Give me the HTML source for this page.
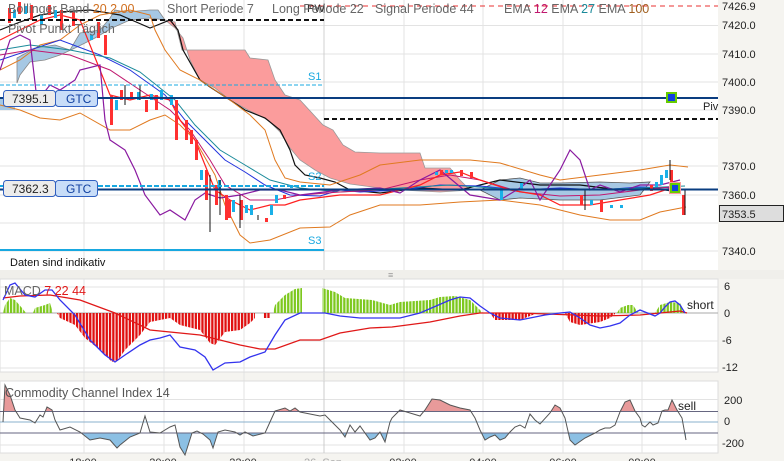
<!DOCTYPE html>
<html><head><meta charset="utf-8"><style>
html,body{margin:0;padding:0;background:#f5f4f0;}
svg{display:block;font-family:"Liberation Sans",sans-serif;}
</style></head><body>
<svg width="784" height="461" viewBox="0 0 784 461" xmlns="http://www.w3.org/2000/svg">
<defs>
<pattern id="pg" width="3.3" height="10" patternUnits="userSpaceOnUse"><rect x="0" y="0" width="2.3" height="10" fill="#7dc81e"/></pattern>
<pattern id="pr" width="3.3" height="10" patternUnits="userSpaceOnUse"><rect x="0" y="0" width="2.3" height="10" fill="#e01010"/></pattern>
<clipPath id="cAbove"><rect x="0" y="380" width="718" height="31.5"/></clipPath>
<clipPath id="cBelow"><rect x="0" y="433" width="718" height="30"/></clipPath>
<clipPath id="main"><rect x="0" y="0" width="718" height="270"/></clipPath>
</defs>
<rect x="0" y="0" width="784" height="461" fill="#f5f4f0"/>
<rect x="0" y="0" width="718" height="270" fill="#fff"/>
<g stroke="#e3e3e3" stroke-width="1">
<line x1="0" y1="25.5" x2="718" y2="25.5"/><line x1="0" y1="54" x2="718" y2="54"/><line x1="0" y1="82" x2="718" y2="82"/><line x1="0" y1="110" x2="718" y2="110"/><line x1="0" y1="138" x2="718" y2="138"/><line x1="0" y1="166" x2="718" y2="166"/><line x1="0" y1="195" x2="718" y2="195"/><line x1="0" y1="223" x2="718" y2="223"/><line x1="0" y1="251" x2="718" y2="251"/>
<line x1="84" y1="0" x2="84" y2="453"/><line x1="164" y1="0" x2="164" y2="453"/><line x1="244" y1="0" x2="244" y2="453"/><line x1="324" y1="0" x2="324" y2="453" stroke="#d0d0d0"/><line x1="404" y1="0" x2="404" y2="453"/><line x1="483" y1="0" x2="483" y2="453"/><line x1="563" y1="0" x2="563" y2="453"/><line x1="642" y1="0" x2="642" y2="453"/>
</g>
<g clip-path="url(#main)">
<polygon fill="#a6c8e4" stroke="#888" stroke-width="0.8" points="17,83 17,58 35,48 55,45 70,50 80,33 100,30 110,18 115,10 125,12 150,10 158,10 165,20 150,18 130,20 112,28 95,38 75,48 60,55 45,60 30,62 20,75"/>
<polygon fill="#a6c8e4" points="0,97 15,97 15,110 0,110"/>
<polygon fill="#fb9c9c" stroke="#999" stroke-width="0.8" points="165,20 175,22 182,50 245,50 250,58 268,60 275,80 285,95 300,100 323,125 333,130 343,145 355,152 380,153 420,153 425,168 450,168 460,180 470,190 440,192 400,190 380,188 350,184 330,178 315,170 300,160 290,148 280,132 268,120 248,110 230,100 215,88 200,80 190,60 183,38 175,28"/>
<polygon fill="#a6c8e4" stroke="#555" stroke-width="0.8" points="480,190 500,180 520,178 540,183 560,183 600,182 630,183 650,182 640,195 600,200 560,200 520,198 500,200"/>
<polyline fill="none" stroke="#111" stroke-width="1.2" points="0,30 20,22 40,15 60,12 90,10 120,15 150,28 170,20 178,30 183,50 200,80 210,87 230,100 245,110 265,118 280,130 290,150 295,165 305,175 320,178 335,182 350,190 380,193 420,188 460,190 500,180 540,185 580,185 620,190 650,188 680,192"/>
<polyline fill="none" stroke="#e07a20" stroke-width="1" points="0,70 20,60 40,45 60,40 80,25 100,15 130,10 150,15 155,30 165,50 180,70 200,80 230,100 250,115 265,130 275,160 285,178 300,182 330,185 360,175 380,165 420,160 470,160 500,163 540,175 560,180 600,175 640,170 670,165 688,167"/>
<polyline fill="none" stroke="#e07a20" stroke-width="1" points="0,105 20,110 40,118 60,120 80,113 110,130 130,130 150,120 165,115 180,125 195,140 215,175 225,205 240,235 250,243 270,240 300,228 330,227 350,215 380,205 420,205 460,202 500,200 540,205 580,215 610,220 640,220 660,212 686,207"/>
<polyline fill="none" stroke="#2233dd" stroke-width="1" points="0,60 30,50 60,40 100,55 130,70 165,95 185,120 205,140 225,160 245,172 265,185 290,195 320,196 340,190 360,192 400,190 440,185 480,186 520,190 560,188 600,190 640,187 680,188"/>
<polyline fill="none" stroke="#1a8a9a" stroke-width="1" points="0,50 30,45 70,50 110,58 140,72 175,100 195,125 220,150 245,165 270,180 300,188 340,192 400,188 450,185 520,190 580,190 640,188 685,186"/>
<polyline fill="none" stroke="#c0186e" stroke-width="1" points="0,55 30,50 70,55 110,70 140,90 170,110 190,130 210,160 225,185 250,200 275,200 300,195 340,192 380,190 420,180 450,175 480,180 520,192 560,196 600,195 640,190 680,186"/>
<polyline fill="none" stroke="#ff2020" stroke-width="1.2" points="0,40 20,30 40,20 60,15 80,20 110,95 130,100 150,95 170,100 180,120 195,140 205,165 215,190 230,200 250,210 270,205 285,205 300,200 340,195 380,195 420,185 440,175 460,172 480,180 510,190 540,195 560,205 590,205 620,200 650,195 680,185"/>
<polyline fill="none" stroke="#8a1aa0" stroke-width="1.2" points="0,70 10,40 20,35 30,40 37,100 42,95 50,85 60,90 75,80 80,70 100,65 105,120 110,140 125,150 135,170 145,195 160,215 170,210 185,220 195,200 205,193 220,198 240,195 260,190 280,190 300,195 340,190 380,188 400,193 420,180 440,170 470,195 500,200 520,188 530,180 540,200 550,185 560,170 570,150 580,160 590,190 600,185 620,192 640,185 660,185 680,180"/>
<g fill="#ff3030">
<rect x="110" y="95" width="3" height="30"/><rect x="155" y="95" width="3" height="15"/><rect x="175" y="100" width="3" height="40"/><rect x="185" y="120" width="3" height="20"/><rect x="205" y="170" width="3" height="30"/><rect x="225" y="195" width="3" height="25"/><rect x="240" y="200" width="3" height="20"/><rect x="265" y="218" width="3" height="4"/><rect x="283" y="195" width="3" height="4"/><rect x="440" y="170" width="3" height="5"/><rect x="460" y="170" width="3" height="6"/><rect x="580" y="195" width="3" height="10"/><rect x="600" y="200" width="3" height="12"/><rect x="670" y="170" width="3" height="20"/><rect x="682" y="195" width="3" height="20"/>
<rect x="120" y="90" width="3" height="10"/><rect x="60" y="10" width="3" height="20"/><rect x="30" y="5" width="3" height="15"/><rect x="195" y="140" width="3" height="20"/><rect x="215" y="185" width="3" height="20"/>
<rect x="8" y="8" width="3" height="15"/><rect x="18" y="2" width="3" height="12"/><rect x="48" y="5" width="3" height="10"/><rect x="72" y="12" width="3" height="14"/><rect x="97" y="22" width="3" height="16"/><rect x="104" y="35" width="3" height="20"/><rect x="130" y="92" width="3" height="8"/><rect x="145" y="100" width="3" height="12"/><rect x="190" y="130" width="3" height="14"/><rect x="228" y="200" width="3" height="18"/><rect x="470" y="172" width="3" height="6"/><rect x="650" y="185" width="3" height="6"/>
</g>
<g fill="#1ab0e8">
<rect x="115" y="100" width="3" height="10"/><rect x="160" y="90" width="3" height="10"/><rect x="170" y="95" width="3" height="10"/><rect x="200" y="170" width="3" height="10"/><rect x="218" y="180" width="3" height="10"/><rect x="232" y="200" width="3" height="12"/><rect x="250" y="205" width="3" height="10"/><rect x="270" y="205" width="3" height="10"/><rect x="275" y="195" width="3" height="8"/><rect x="290" y="185" width="3" height="3"/><rect x="435" y="172" width="3" height="3"/><rect x="450" y="170" width="3" height="3"/><rect x="500" y="190" width="3" height="10"/><rect x="590" y="200" width="3" height="5"/><rect x="610" y="205" width="3" height="3"/><rect x="620" y="205" width="3" height="3"/><rect x="660" y="175" width="3" height="10"/><rect x="665" y="170" width="3" height="8"/><rect x="40" y="15" width="3" height="10"/><rect x="90" y="35" width="3" height="5"/>
<rect x="13" y="10" width="3" height="8"/><rect x="24" y="6" width="3" height="8"/><rect x="54" y="10" width="3" height="8"/><rect x="137" y="92" width="3" height="8"/><rect x="150" y="94" width="3" height="6"/><rect x="245" y="205" width="3" height="8"/><rect x="445" y="170" width="3" height="3"/><rect x="520" y="183" width="3" height="6"/><rect x="655" y="182" width="3" height="5"/>
</g>
<g stroke="#111" stroke-width="1">
<line x1="210" y1="175" x2="210" y2="232"/><line x1="240" y1="195" x2="240" y2="228"/><line x1="125" y1="85" x2="125" y2="105"/><line x1="140" y1="85" x2="140" y2="100"/><line x1="220" y1="180" x2="220" y2="215"/><line x1="585" y1="190" x2="585" y2="210"/><line x1="670" y1="160" x2="670" y2="180"/><line x1="685" y1="190" x2="685" y2="215"/><line x1="258" y1="215" x2="258" y2="220"/>
</g>
</g>
<line x1="0" y1="20" x2="324" y2="20" stroke="#111" stroke-width="2" stroke-dasharray="5,3"/>
<line x1="324" y1="119" x2="718" y2="119" stroke="#111" stroke-width="2" stroke-dasharray="5,3"/>
<line x1="300" y1="6" x2="718" y2="6" stroke="#e83030" stroke-width="1" stroke-dasharray="5,4"/>
<line x1="0" y1="85" x2="324" y2="85" stroke="#18a8e0" stroke-width="1" stroke-dasharray="4,2"/>
<line x1="0" y1="186" x2="324" y2="186" stroke="#18a8e0" stroke-width="2" stroke-dasharray="5,2"/>
<line x1="0" y1="250" x2="324" y2="250" stroke="#18a8e0" stroke-width="2"/>
<line x1="0" y1="98" x2="718" y2="98" stroke="#0a3d80" stroke-width="2"/>
<line x1="0" y1="189.5" x2="718" y2="189.5" stroke="#0a3d80" stroke-width="2"/>
<rect x="667" y="93" width="9" height="9" fill="#1040e0" stroke="#66cc00" stroke-width="2"/>
<rect x="669" y="182" width="12" height="12" fill="#fb9c9c"/>
<rect x="671" y="184" width="8" height="8" fill="#1040e0" stroke="#66cc00" stroke-width="2"/>
<g font-size="11" fill="#18a8e0"><text x="308" y="80">S1</text><text x="308" y="180">S2</text><text x="308" y="244">S3</text></g>
<text x="703" y="110" font-size="11" fill="#222">Piv</text>
<text x="307" y="12" font-size="11" fill="#222">PW</text>
<g font-size="12">
<rect x="3.5" y="90.5" width="52" height="16" rx="3" fill="#ececec" stroke="#3060c0"/><rect x="55.5" y="90.5" width="42" height="16" rx="3" fill="#c8ddf8" stroke="#3060c0"/>
<text x="12" y="103" fill="#222">7395.1</text><text x="66" y="103" fill="#1040a0">GTC</text>
<rect x="3.5" y="180.5" width="52" height="16" rx="3" fill="#ececec" stroke="#3060c0"/><rect x="55.5" y="180.5" width="42" height="16" rx="3" fill="#c8ddf8" stroke="#3060c0"/>
<text x="12" y="193" fill="#222">7362.3</text><text x="66" y="193" fill="#1040a0">GTC</text>
</g>
<text x="10" y="266" font-size="11" fill="#111">Daten sind indikativ</text>
<g font-size="12.5" fill="#666">
<text x="8" y="13">Bollinger Band <tspan fill="#d07020">20  2.00</tspan></text>
<text x="167" y="13">Short Periode  7</text>
<text x="272" y="13">Long Periode  22</text>
<text x="375" y="13">Signal Periode  44</text>
<text x="504" y="13">EMA  <tspan fill="#c0186e">12</tspan>   EMA  <tspan fill="#1a8a9a">27</tspan>   EMA  <tspan fill="#a06020">100</tspan></text>
<text x="8" y="33">Pivot Punkt  Täglich</text>
</g>
<g font-size="11" fill="#222">
<text x="722" y="10">7426.9</text><text x="722" y="29">7420.0</text><text x="722" y="58">7410.0</text><text x="722" y="86">7400.0</text><text x="722" y="114">7390.0</text><text x="722" y="170">7370.0</text><text x="722" y="199">7360.0</text><text x="722" y="255">7340.0</text>
</g>
<rect x="719.5" y="205.5" width="64" height="16" fill="#ddd" stroke="#222"/>
<text x="722" y="218" font-size="11" fill="#222">7353.5</text>
<rect x="0" y="270" width="784" height="9" fill="#f0efeb"/>
<text x="388" y="278" font-size="9" fill="#999">≡</text>
<text x="388" y="387" font-size="9" fill="#999">≡</text>
<rect x="0" y="279" width="718" height="93" fill="#fff" stroke="#ddd"/>
<g stroke="#e3e3e3"><line x1="0" y1="287" x2="718" y2="287"/><line x1="0" y1="341" x2="718" y2="341"/><line x1="0" y1="368" x2="718" y2="368"/>
<line x1="84" y1="279" x2="84" y2="372"/><line x1="164" y1="279" x2="164" y2="372"/><line x1="244" y1="279" x2="244" y2="372"/><line x1="404" y1="279" x2="404" y2="372"/><line x1="483" y1="279" x2="483" y2="372"/><line x1="563" y1="279" x2="563" y2="372"/><line x1="642" y1="279" x2="642" y2="372"/></g>
<line x1="324" y1="279" x2="324" y2="372" stroke="#ccc"/>
<line x1="0" y1="313" x2="718" y2="313" stroke="#aaa"/>
<g>
<polygon fill="url(#pg)" points="3,313 5,305 10,298 15,300 22,308 26,313"/>
<polygon fill="url(#pg)" points="33,313 35,308 45,305 50,303 53,313"/>
<polygon fill="url(#pr)" points="57,313 60,318 75,325 85,338 100,350 112,362 118,360 125,350 140,335 150,322 170,318 180,325 200,330 210,343 215,345 225,332 240,330 250,323 255,318 255,313"/>
<polygon fill="url(#pr)" points="263,313 263,318 270,318 270,313"/>
<polygon fill="url(#pg)" points="273,313 275,305 285,295 295,289 302,288 302,313"/>
<polygon fill="url(#pg)" points="322,313 322,288 335,292 345,298 372,300 390,305 400,302 430,300 440,297 455,296 470,300 480,310 483,313"/>
<polygon fill="url(#pr)" points="490,313 495,320 520,320 525,318 535,314 535,313"/>
<polygon fill="url(#pr)" points="565,313 570,322 580,325 600,322 610,318 615,314 615,313"/>
<polygon fill="url(#pg)" points="617,313 620,308 628,305 633,305 638,313"/>
<polygon fill="url(#pg)" points="655,313 660,305 670,302 680,303 685,313"/>
</g>
<polyline fill="none" stroke="#e01818" stroke-width="1.3" points="3,298 20,296 50,295 80,300 115,313 150,330 200,335 240,345 260,349 275,349 300,340 320,340 340,333 370,328 392,327 430,322 460,316 480,313 520,313 600,316 640,315 680,311 687,313"/>
<polyline fill="none" stroke="#3333ee" stroke-width="1.3" points="3,300 10,285 15,283 25,295 35,297 45,290 52,290 60,300 75,315 90,340 105,355 115,362 125,355 140,345 150,340 160,338 170,335 180,347 195,350 205,357 213,370 225,363 240,362 250,357 265,352 275,335 285,320 300,313 325,313 340,316 360,318 380,318 400,318 420,313 450,300 460,297 470,298 480,306 490,313 500,318 520,320 530,318 545,315 560,313 570,312 580,318 590,325 600,328 610,326 620,323 630,315 640,310 650,314 655,316 660,313 665,307 670,302 675,301 680,305 685,313"/>
<text x="4" y="295" font-size="12.5" fill="#666">MACD <tspan fill="#e01818">7    22  44</tspan></text>
<text x="687" y="309" font-size="12" fill="#222">short</text>
<g font-size="11" fill="#222"><text x="724" y="290">6</text><text x="724" y="317">0</text><text x="722" y="344">-6</text><text x="722" y="371">-12</text></g>
<rect x="0" y="381" width="718" height="72" fill="#fff" stroke="#ddd"/>
<g stroke="#e3e3e3"><line x1="0" y1="399.5" x2="718" y2="399.5"/><line x1="0" y1="445" x2="718" y2="445"/>
<line x1="84" y1="381" x2="84" y2="453"/><line x1="164" y1="381" x2="164" y2="453"/><line x1="244" y1="381" x2="244" y2="453"/><line x1="404" y1="381" x2="404" y2="453"/><line x1="483" y1="381" x2="483" y2="453"/><line x1="563" y1="381" x2="563" y2="453"/><line x1="642" y1="381" x2="642" y2="453"/></g>
<line x1="324" y1="381" x2="324" y2="453" stroke="#ccc"/>
<polygon clip-path="url(#cAbove)" fill="#e89a9a" points="3,422 5,385 10,395 15,410 20,418 30,420 35,423 40,415 43,417 47,407 52,410 55,420 60,430 70,427 80,432 90,440 100,438 110,440 117,448 120,445 130,437 140,433 145,416 150,432 160,433 170,427 175,425 180,447 185,455 192,433 197,431 203,434 210,440 213,448 218,432 225,430 235,432 240,435 245,432 253,436 265,433 270,422 275,411 285,408 290,411 295,408 300,412 320,416 325,415 330,420 340,430 345,437 350,425 355,432 360,426 370,440 375,438 380,432 385,442 390,422 392,418 397,413 400,410 410,413 420,416 425,410 432,399 440,400 450,405 460,408 470,410 475,418 480,430 485,440 490,437 495,435 500,440 505,438 510,432 515,427 520,425 525,428 530,414 535,420 540,424 550,413 555,405 560,408 565,418 570,440 575,445 585,438 595,433 600,430 605,428 610,428 615,425 620,412 625,402 630,400 635,411 640,418 642,425 645,427 650,422 653,425 658,423 662,411 665,410 668,410 672,400 677,410 682,418 686,440 686,411.5 3,411.5"/>
<polygon clip-path="url(#cBelow)" fill="#8cc0e4" points="3,422 5,385 10,395 15,410 20,418 30,420 35,423 40,415 43,417 47,407 52,410 55,420 60,430 70,427 80,432 90,440 100,438 110,440 117,448 120,445 130,437 140,433 145,416 150,432 160,433 170,427 175,425 180,447 185,455 192,433 197,431 203,434 210,440 213,448 218,432 225,430 235,432 240,435 245,432 253,436 265,433 270,422 275,411 285,408 290,411 295,408 300,412 320,416 325,415 330,420 340,430 345,437 350,425 355,432 360,426 370,440 375,438 380,432 385,442 390,422 392,418 397,413 400,410 410,413 420,416 425,410 432,399 440,400 450,405 460,408 470,410 475,418 480,430 485,440 490,437 495,435 500,440 505,438 510,432 515,427 520,425 525,428 530,414 535,420 540,424 550,413 555,405 560,408 565,418 570,440 575,445 585,438 595,433 600,430 605,428 610,428 615,425 620,412 625,402 630,400 635,411 640,418 642,425 645,427 650,422 653,425 658,423 662,411 665,410 668,410 672,400 677,410 682,418 686,440 686,433 3,433"/>
<line x1="0" y1="411.5" x2="718" y2="411.5" stroke="#666680"/>
<line x1="0" y1="422" x2="718" y2="422" stroke="#8ab0cc"/>
<line x1="0" y1="433" x2="718" y2="433" stroke="#666680"/>
<polyline fill="none" stroke="#555" stroke-width="1" points="3,422 5,385 10,395 15,410 20,418 30,420 35,423 40,415 43,417 47,407 52,410 55,420 60,430 70,427 80,432 90,440 100,438 110,440 117,448 120,445 130,437 140,433 145,416 150,432 160,433 170,427 175,425 180,447 185,455 192,433 197,431 203,434 210,440 213,448 218,432 225,430 235,432 240,435 245,432 253,436 265,433 270,422 275,411 285,408 290,411 295,408 300,412 320,416 325,415 330,420 340,430 345,437 350,425 355,432 360,426 370,440 375,438 380,432 385,442 390,422 392,418 397,413 400,410 410,413 420,416 425,410 432,399 440,400 450,405 460,408 470,410 475,418 480,430 485,440 490,437 495,435 500,440 505,438 510,432 515,427 520,425 525,428 530,414 535,420 540,424 550,413 555,405 560,408 565,418 570,440 575,445 585,438 595,433 600,430 605,428 610,428 615,425 620,412 625,402 630,400 635,411 640,418 642,425 645,427 650,422 653,425 658,423 662,411 665,410 668,410 672,400 677,410 682,418 686,440"/>
<text x="5" y="397" font-size="12.5" fill="#555">Commodity Channel Index  14</text>
<text x="678" y="410" font-size="12" fill="#222">sell</text>
<g font-size="11" fill="#222"><text x="724" y="404">200</text><text x="724" y="425">0</text><text x="722" y="447">-200</text></g>
<g font-size="11" fill="#333" text-anchor="middle">
<text x="83" y="466">18:00</text><text x="163" y="466">20:00</text><text x="243" y="466">22:00</text><text x="323" y="466" fill="#aaa">26. Sep</text><text x="403" y="466">02:00</text><text x="483" y="466">04:00</text><text x="563" y="466">06:00</text><text x="642" y="466">08:00</text>
</g>
</svg>
</body></html>
